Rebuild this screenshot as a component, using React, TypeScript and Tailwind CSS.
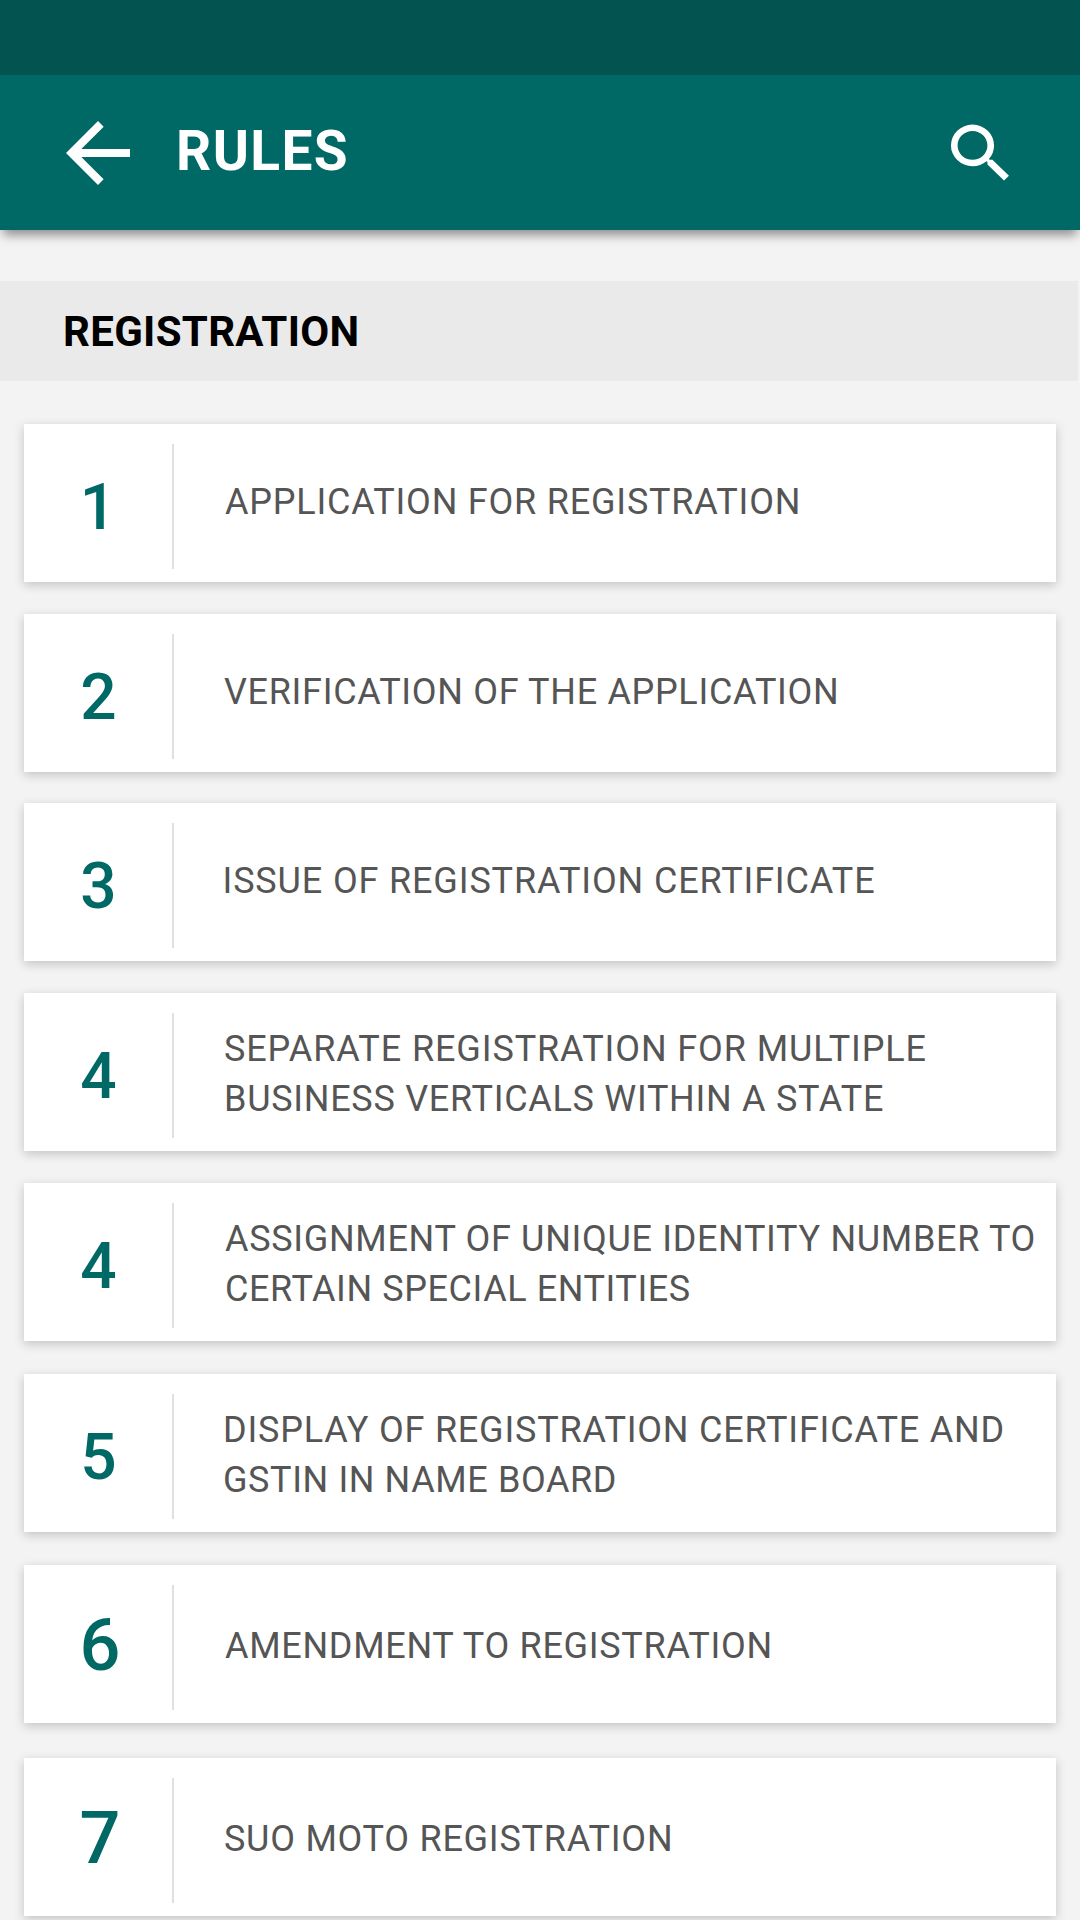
type Line = { text: string; style: string };
type Rule = { no: string; lines: Line[]; gap: string; title: string; number: string };

const MID = "mt-[53px]";
const LOW = "mt-[56px]";
const TWO = "mt-[31px]";
const NUM = "mt-[46px] pl-px text-[64px] leading-[75px]";
const BIG = "mt-[39px] pl-1 text-[72px] leading-[84px]";

const rules: Rule[] = [
  { no: "1", gap: "mt-[43px]", title: MID, number: "mt-[46px] text-[64px] leading-[75px]", lines: [{ text: "APPLICATION FOR REGISTRATION", style: "ml-[51px] tracking-[0.79px]" }] },
  { no: "2", gap: "mt-8", title: MID, number: NUM, lines: [{ text: "VERIFICATION OF THE APPLICATION", style: "ml-[50px] tracking-[0.68px]" }] },
  { no: "3", gap: "mt-[31px]", title: MID, number: NUM, lines: [{ text: "ISSUE OF REGISTRATION CERTIFICATE", style: "ml-[48.5px] tracking-[0.85px]" }] },
  {
    no: "4", gap: "mt-8", title: TWO, number: NUM,
    lines: [
      { text: "SEPARATE REGISTRATION FOR MULTIPLE", style: "ml-[50px] tracking-[0.89px]" },
      { text: "BUSINESS VERTICALS WITHIN A STATE", style: "ml-[50px] tracking-[0.71px]" },
    ],
  },
  {
    no: "4", gap: "mt-8", title: TWO, number: NUM,
    lines: [
      { text: "ASSIGNMENT OF UNIQUE IDENTITY NUMBER TO", style: "ml-[51px] tracking-[0.68px]" },
      { text: "CERTAIN SPECIAL ENTITIES", style: "ml-[51px] tracking-[0.57px]" },
    ],
  },
  {
    no: "5", gap: "mt-[33px]", title: TWO, number: NUM,
    lines: [
      { text: "DISPLAY OF REGISTRATION CERTIFICATE AND", style: "ml-[49px] tracking-[0.79px]" },
      { text: "GSTIN IN NAME BOARD", style: "ml-[49px] tracking-[0.6px]" },
    ],
  },
  { no: "6", gap: "mt-[33px]", title: LOW, number: BIG, lines: [{ text: "AMENDMENT TO REGISTRATION", style: "ml-[51px] tracking-[0.7px]" }] },
  { no: "7", gap: "mt-[35px]", title: LOW, number: BIG, lines: [{ text: "SUO MOTO REGISTRATION", style: "ml-[50px] tracking-[0.74px]" }] },
];

function BackIcon() {
  return (
    <svg viewBox="0 0 24 24" className="mt-[30px] ml-[50px] h-24 w-24 shrink-0" fill="currentColor">
      <path d="M20 11H7.83l5.59-5.59L12 4l-8 8 8 8 1.41-1.41L7.83 13H20v-2z" />
    </svg>
  );
}

function SearchIcon() {
  return (
    <svg viewBox="0 0 24 24" preserveAspectRatio="none" className="mt-[40.4px] mr-[59.4px] ml-auto h-[76.8px] w-[79.6px] shrink-0" fill="currentColor">
      <path d="M15.5 14h-.79l-.28-.27A6.471 6.471 0 0 0 16 9.5 6.5 6.5 0 1 0 9.5 16c1.61 0 3.09-.59 4.23-1.57l.27.28v.79l5 4.99L20.49 19l-4.99-5zm-6 0C7.01 14 5 11.99 5 9.5S7.01 5 9.5 5 14 7.01 14 9.5 11.99 14 9.5 14z" />
    </svg>
  );
}

function RuleCard({ rule }: { rule: Rule }) {
  return (
    <li className={`flex h-[158px] shrink-0 bg-white shadow-[0_3px_10px_rgba(0,0,0,0.2)] ${rule.gap}`}>
      <div className={`w-[148px] shrink-0 text-center font-medium text-[#006966] ${rule.number}`}>{rule.no}</div>
      <div className="mt-5 h-[125px] w-0.5 shrink-0 bg-[#e0e0e0]" />
      <div className={`text-[36px] leading-[50px] whitespace-nowrap text-[#555555] ${rule.title}`}>
        {rule.lines.map((line) => (
          <p key={line.text} className={line.style}>{line.text}</p>
        ))}
      </div>
    </li>
  );
}

export default function App() {
  return (
    <div className="isolate flex h-[1920px] w-[1080px] flex-col overflow-hidden bg-[#f3f3f3] font-['Roboto',sans-serif]">
      <div className="h-[75px] shrink-0 bg-[#035351]" />
      <header className="relative flex h-[155px] shrink-0 bg-[#006966] text-white">
        <div className="absolute inset-x-[3px] inset-y-0 -z-10 shadow-[0_5px_10px_rgba(0,0,0,0.42)]" />
        <BackIcon />
        <h1 className="mt-[44px] ml-[30px] text-[55px] leading-[64px] font-bold tracking-[1.4px]">RULES</h1>
        <SearchIcon />
      </header>
      <div className="mt-[51px] h-[100px] w-[1078px] shrink-0 bg-[#eaeaea] pt-[26px] pl-[63px]">
        <h2 className="text-[42px] leading-[49px] font-bold tracking-[0.3px] text-black">REGISTRATION</h2>
      </div>
      <ul className="flex flex-col px-6">
        {rules.map((rule, i) => (
          <RuleCard key={i} rule={rule} />
        ))}
      </ul>
    </div>
  );
}
